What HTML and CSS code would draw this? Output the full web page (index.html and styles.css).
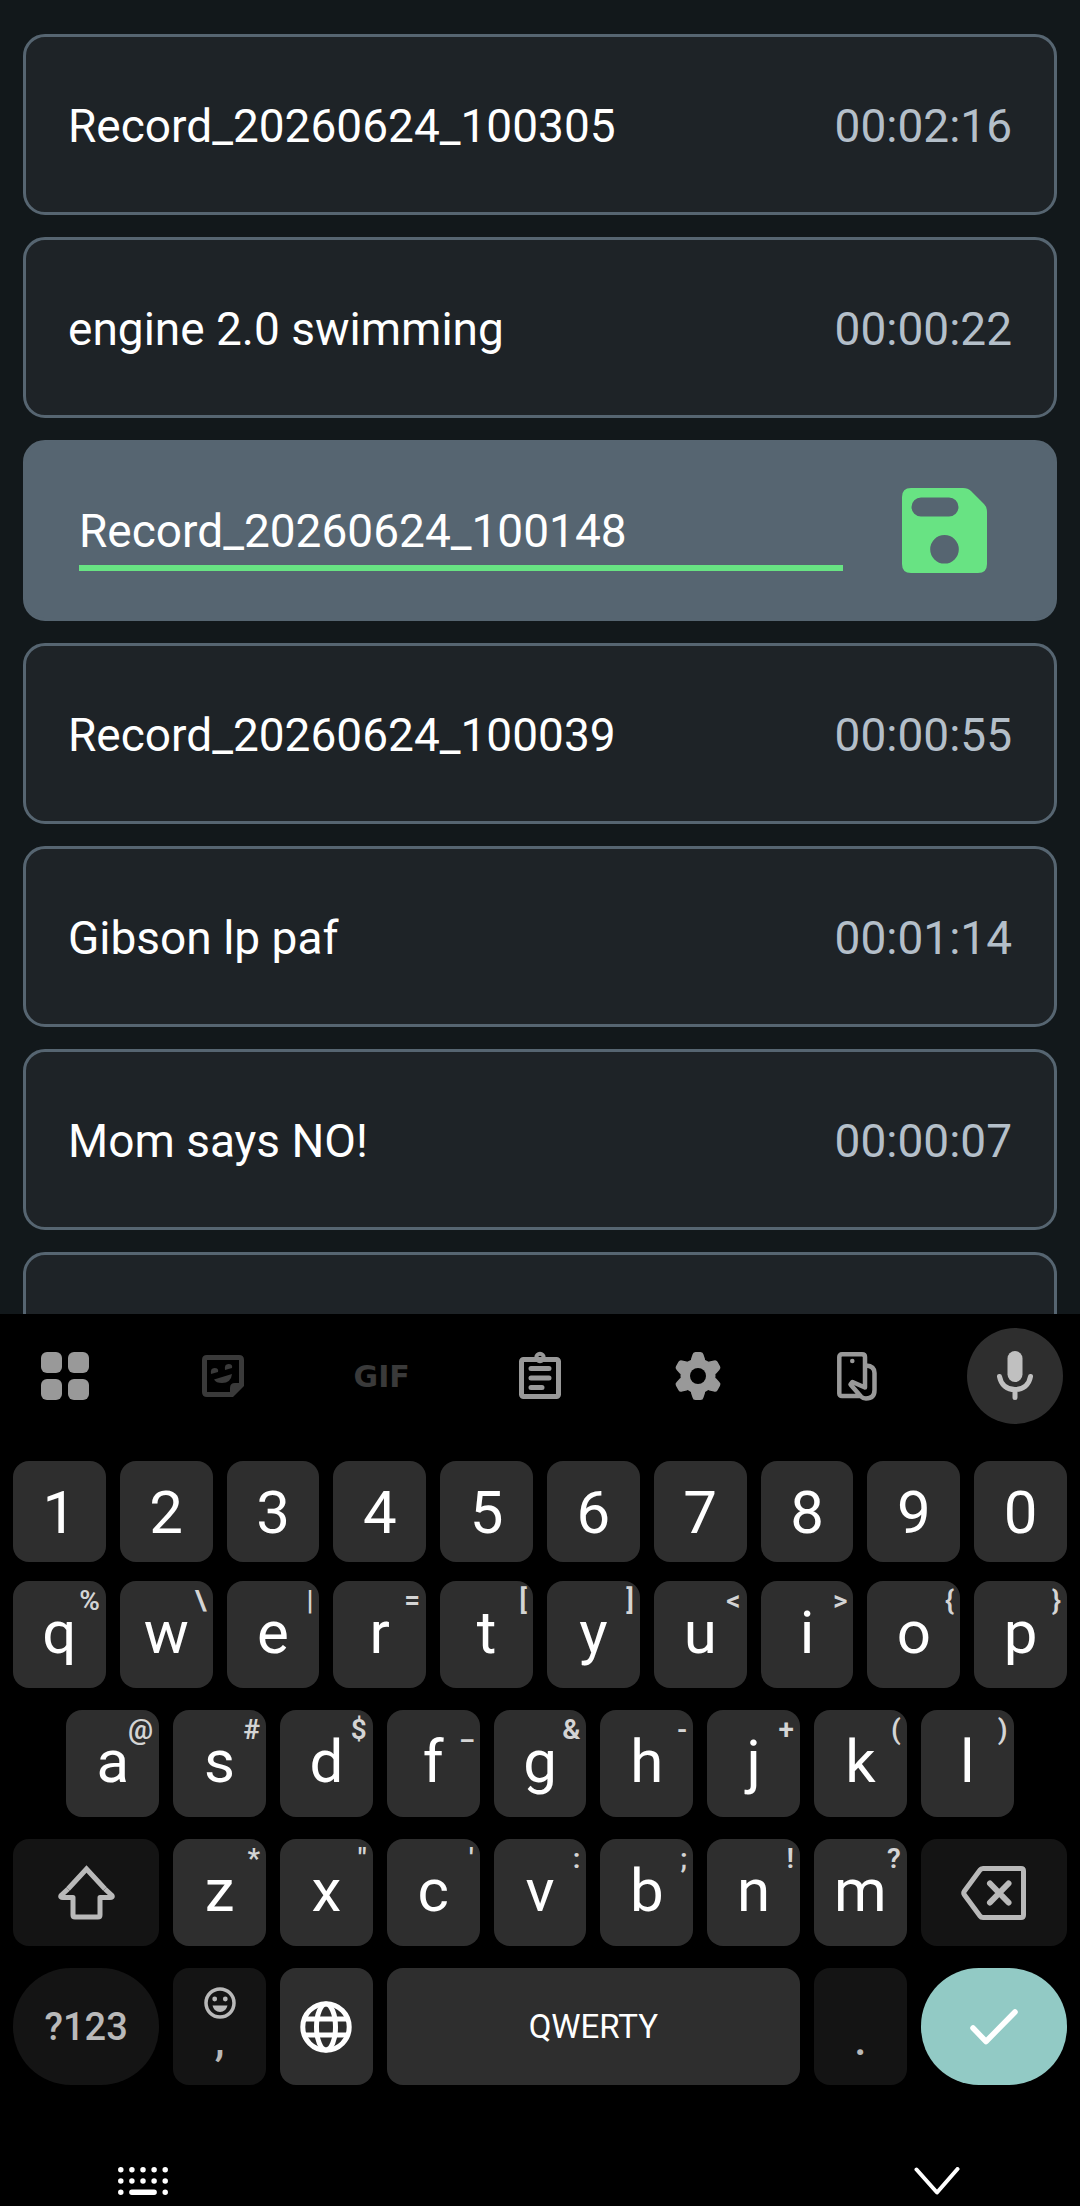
FILE: index.html
```html
<!DOCTYPE html>
<html lang="en">
<head>
    <meta charset="UTF-8">
    <meta name="viewport" content="width=device-width, initial-scale=1.0">
    <title>Recordings</title>
    <link rel="stylesheet" href="styles.css">
</head>
<body>

    <!-- Recordings -->
    <main class="records">
        <ul class="record-list">
            <li class="record"><span>Record_20260624_100305</span><span class="time">00:02:16</span></li>
            <li class="record"><span>engine 2.0 swimming</span><span class="time">00:00:22</span></li>
            <li class="record editing">
                <input class="name-input" type="text" aria-label="Record name" value="Record_20260624_100148">
                <button class="save" type="button" aria-label="Save">
                    <svg width="85" height="85" viewBox="0 0 85 85">
                        <path fill="#68e383" fill-rule="evenodd" d="M9 0H61Q66 0 69 3L82 16Q85 19 85 24V76Q85 85 76 85H9Q0 85 0 76V9Q0 0 9 0ZM19 9.500A9.500 9.500 0 0 0 19 28.500H47A9.500 9.500 0 0 0 47 9.500ZM42.500 47A14.300 14.300 0 1 0 42.500 75.600A14.300 14.300 0 1 0 42.500 47Z"/>
                    </svg>
                </button>
            </li>
            <li class="record"><span>Record_20260624_100039</span><span class="time">00:00:55</span></li>
            <li class="record"><span>Gibson lp paf</span><span class="time">00:01:14</span></li>
            <li class="record"><span>Mom says NO!</span><span class="time">00:00:07</span></li>
            <li class="record"></li>
        </ul>
    </main>

    <!-- Keyboard -->
    <section class="keyboard">
        <div class="toolbar">
            <button class="tool" type="button" aria-label="Apps">
                <svg width="48" height="48" viewBox="0 0 48 48" fill="#999">
                    <rect width="21" height="21" rx="6"/>
                    <rect x="27" width="21" height="21" rx="6"/>
                    <rect y="27" width="21" height="21" rx="6"/>
                    <rect x="27" y="27" width="21" height="21" rx="6"/>
                </svg>
            </button>
            <button class="tool" type="button" aria-label="Stickers">
                <svg width="42" height="42" viewBox="0 0 42 42" fill="#3a3a3a">
                    <path fill-rule="evenodd" d="M5 0H37Q42 0 42 5V31L31 42H5Q0 42 0 37V5Q0 0 5 0ZM5 5V37H28V33Q28 28 33 28H37V5Z"/>
                    <path d="M9 19Q8 13 12.500 13T16 17Z"/>
                    <path d="M23 15Q22 9 26.500 9T30 13Z"/>
                    <path d="M12 24.500L30 19Q29 28 20 28Q14 28 12 24.500Z"/>
                </svg>
            </button>
            <button class="tool gif" type="button">GIF</button>
            <button class="tool" type="button" aria-label="Clipboard">
                <svg width="42" height="50" viewBox="0 0 42 50" fill="none" stroke="#999" stroke-width="5" stroke-linecap="round" stroke-linejoin="round">
                    <rect x="2.500" y="8.500" width="37" height="37" rx="2"/>
                    <circle cx="21" cy="6.500" r="3.700" stroke-width="4"/>
                    <path d="M12 17.500H30M12 27H30M12 36.500H23"/>
                </svg>
            </button>
            <button class="tool" type="button" aria-label="Settings">
                <svg width="48" height="48" viewBox="-24 -24 48 48" fill="#999">
                    <circle r="17.500"/>
                    <path id="teeth" d="M-7 -17L-5.500 -21.500Q-5 -24 -2.500 -24H2.500Q5 -24 5.500 -21.500L7 -17V17L5.500 21.500Q5 24 2.500 24H-2.500Q-5 24 -5.500 21.500L-7 17Z"/>
                    <use href="#teeth" transform="rotate(60)"/>
                    <use href="#teeth" transform="rotate(120)"/>
                    <circle r="8" fill="#000"/>
                </svg>
            </button>
            <button class="tool" type="button" aria-label="One-handed mode">
                <svg width="40" height="49" viewBox="0 0 40 49" fill="none" stroke="#999" stroke-width="4.500" stroke-linecap="round" stroke-linejoin="round">
                    <path d="M23 44H5Q2.300 44 2.300 41.500V5Q2.300 2.300 5 2.300H25Q28 2.300 28 5V35.500L15.500 30L13.500 32.500L24 44.500Q26 46.500 29 46.500Q37.500 46.500 37.500 38V21Q37.500 14 29 13.500"/>
                    <circle cx="15.300" cy="9" r="2.300" fill="#999" stroke="none"/>
                </svg>
            </button>
            <button class="tool mic" type="button" aria-label="Voice input">
                <svg width="36" height="50" viewBox="0 0 36 50" fill="none" stroke="#c0c0c0" stroke-width="5" stroke-linecap="round">
                    <rect x="10.500" y="0" width="15" height="31" rx="7.500" fill="#c0c0c0" stroke="none"/>
                    <path d="M2.500 25.500C4 34 10 38.500 18 38.500S32 34 33.500 25.500M18 39V46.500"/>
                </svg>
            </button>
        </div>

        <div class="row numbers">
            <button class="key" type="button">1</button>
            <button class="key" type="button">2</button>
            <button class="key" type="button">3</button>
            <button class="key" type="button">4</button>
            <button class="key" type="button">5</button>
            <button class="key" type="button">6</button>
            <button class="key" type="button">7</button>
            <button class="key" type="button">8</button>
            <button class="key" type="button">9</button>
            <button class="key" type="button">0</button>
        </div>

        <div class="row letters">
            <button class="key" type="button">q<span class="hint">%</span></button>
            <button class="key" type="button">w<span class="hint">\</span></button>
            <button class="key" type="button">e<span class="hint">|</span></button>
            <button class="key" type="button">r<span class="hint">=</span></button>
            <button class="key" type="button">t<span class="hint">[</span></button>
            <button class="key" type="button">y<span class="hint">]</span></button>
            <button class="key" type="button">u<span class="hint">&lt;</span></button>
            <button class="key" type="button">i<span class="hint">&gt;</span></button>
            <button class="key" type="button">o<span class="hint">{</span></button>
            <button class="key" type="button">p<span class="hint">}</span></button>
        </div>

        <div class="row letters middle">
            <button class="key" type="button">a<span class="hint">@</span></button>
            <button class="key" type="button">s<span class="hint">#</span></button>
            <button class="key" type="button">d<span class="hint">$</span></button>
            <button class="key" type="button">f<span class="hint">_</span></button>
            <button class="key" type="button">g<span class="hint">&amp;</span></button>
            <button class="key" type="button">h<span class="hint">-</span></button>
            <button class="key" type="button">j<span class="hint">+</span></button>
            <button class="key" type="button">k<span class="hint">(</span></button>
            <button class="key" type="button">l<span class="hint">)</span></button>
        </div>

        <div class="row letters">
            <button class="key wide dark" type="button" aria-label="Shift">
                <svg width="57" height="55" viewBox="0 0 57 55" fill="none" stroke="#b9b9b9" stroke-width="5" stroke-linejoin="round">
                    <path stroke-linejoin="miter" d="M10 24L28.500 4L47 24"/>
                    <path d="M10 24L3 30.500Q2 32.500 5 32.500H15V50Q15 52 17 52H40Q42 52 42 50V32.500H52Q55 32.500 54 30.500L47 24"/>
                </svg>
            </button>
            <button class="key" type="button">z<span class="hint">*</span></button>
            <button class="key" type="button">x<span class="hint">"</span></button>
            <button class="key" type="button">c<span class="hint">'</span></button>
            <button class="key" type="button">v<span class="hint">:</span></button>
            <button class="key" type="button">b<span class="hint">;</span></button>
            <button class="key" type="button">n<span class="hint">!</span></button>
            <button class="key" type="button">m<span class="hint">?</span></button>
            <button class="key wide dark" type="button" aria-label="Backspace">
                <svg width="65" height="54" viewBox="0 0 65 54" fill="none" stroke="#b9b9b9" stroke-width="5" stroke-linecap="round" stroke-linejoin="round">
                    <path d="M22 2.500H60Q62.500 2.500 62.500 5V49Q62.500 51.500 60 51.500H22Q20 51.500 19 50L3.500 29Q2 27 3.500 25L19 4Q20 2.500 22 2.500Z"/>
                    <path d="M29 17.500L47.500 36.500M47.500 17.500L29 36.500" stroke-width="6"/>
                </svg>
            </button>
        </div>

        <div class="row bottom">
            <button class="key wide dark round symbols" type="button">?123</button>
            <button class="key dark punct" type="button">
                <svg width="32" height="32" viewBox="0 0 32 32" fill="#b9b9b9">
                    <circle cx="16" cy="16" r="14" fill="none" stroke="#b9b9b9" stroke-width="3.500"/>
                    <circle cx="10.700" cy="12" r="2.400"/>
                    <circle cx="21.300" cy="12" r="2.400"/>
                    <path d="M8.500 18.500H23.500Q22 25 16 25T8.500 18.500Z"/>
                </svg>
                <span>,</span>
            </button>
            <button class="key" type="button" aria-label="Language">
                <svg width="52" height="52" viewBox="0 0 52 52" fill="none" stroke="#fff" stroke-width="5">
                    <circle cx="26" cy="26" r="23.200"/>
                    <ellipse cx="26" cy="26" rx="9.500" ry="23"/>
                    <path d="M4 18H48M4 34H48"/>
                </svg>
            </button>
            <button class="key space" type="button">QWERTY</button>
            <button class="key dark punct" type="button"><span>.</span></button>
            <button class="key wide round enter" type="button" aria-label="Done">
                <svg width="48" height="36" viewBox="0 0 48 36" fill="none" stroke="#fff" stroke-width="5.500" stroke-linecap="round" stroke-linejoin="round">
                    <path d="M3 19L16 32.500L45 3"/>
                </svg>
            </button>
        </div>

        <div class="navbar">
            <button class="nav" type="button" aria-label="Switch keyboard">
                <svg width="50" height="28" viewBox="0 0 50 28" fill="none" stroke="#fff" stroke-width="5.500" stroke-linecap="round">
                    <path d="M2.800 2.800h0M13.900 2.800h0M25 2.800h0M36.100 2.800h0M47.200 2.800h0M2.800 14h0M13.900 14h0M25 14h0M36.100 14h0M47.200 14h0M2.800 25.200h0M13.900 25.200H36.100M47.200 25.200h0"/>
                </svg>
            </button>
            <button class="nav" type="button" aria-label="Hide keyboard">
                <svg width="46" height="28" viewBox="0 0 46 28" fill="none" stroke="#fff" stroke-width="4" stroke-linecap="round" stroke-linejoin="round">
                    <path d="M2.500 2.500L23 25.500L43.500 2"/>
                </svg>
            </button>
        </div>
    </section>

</body>
</html>
```

FILE: styles.css
```css
* { box-sizing: border-box; }
body { margin: 0; height: 100vh; display: flex; flex-direction: column; background: #12181b; color: #fff; font-family: Roboto, sans-serif; }
button { margin: 0; padding: 0; border: none; background: none; color: inherit; font-family: inherit; }
svg { display: block; }

/* Recordings */
.records { flex: 1; min-height: 0; overflow: hidden; padding: 34px 23px 0; }
.record-list { list-style: none; margin: 0; padding: 0; display: flex; flex-direction: column; gap: 22px; }
.record { display: flex; align-items: center; justify-content: space-between; height: 181px; padding: 2px 42px 0; border: 3px solid #566571; border-radius: 22px; background: #1e2327; font-size: 46px; line-height: 56px; }
.time { color: #b4bfc9; }
.editing { background: #566571; padding: 0 67px 0 53px; gap: 59px; }
.name-input { flex: 1; min-width: 0; height: 81px; padding: 14px 0 7px; border: none; border-bottom: 6px solid #68e383; outline: none; background: none; color: #fff; font: inherit; line-height: 54px; }

/* Keyboard */
.keyboard { background: #000; padding: 14px 13px 11px; }
.toolbar { display: flex; justify-content: space-between; padding: 0 4px; margin-bottom: 37px; }
.tool { display: flex; align-items: center; justify-content: center; width: 96px; height: 96px; border-radius: 48px; }
.gif { color: #3a3a3a; font-family: "DejaVu Sans", sans-serif; font-weight: bold; font-size: 30px; }
.mic { background: #2e2e2e; }

/* every key spans two columns, so rows can be shifted by half a key */
.row { display: grid; grid-template-columns: repeat(20, minmax(0, 1fr)); column-gap: 14px; margin-bottom: 22px; }
.key { grid-column: span 2; position: relative; display: flex; align-items: center; justify-content: center; border-radius: 16px; background: #2e2e2e; font-size: 60px; line-height: 70px; }
.wide { grid-column: span 3; }
.dark { background: #141414; color: #b9b9b9; }
.numbers { margin-bottom: 19px; }
.numbers .key { height: 101px; padding-top: 2px; }
.letters .key { height: 107px; padding-bottom: 3px; }
.letters .wide { padding: 0; }
.middle .key:first-child { grid-column: 2 / span 2; }
.hint { position: absolute; top: 6px; right: 6px; color: #d4d4d4; font-size: 28px; font-weight: 600; line-height: 28px; }

.bottom { margin-bottom: 82px; }
.bottom .key { height: 117px; }
.bottom .round { border-radius: 58px; }
.symbols { font-size: 38px; font-weight: 500; }
.space { grid-column: span 8; font-size: 33px; }
.punct { flex-direction: column; justify-content: flex-end; gap: 3px; padding-bottom: 27px; font-size: 44px; font-weight: 500; line-height: 36px; }
.enter { background: #92cac5; }

.navbar { display: flex; justify-content: space-between; padding: 0 105px; }
.nav { display: flex; justify-content: center; width: 50px; }
```
